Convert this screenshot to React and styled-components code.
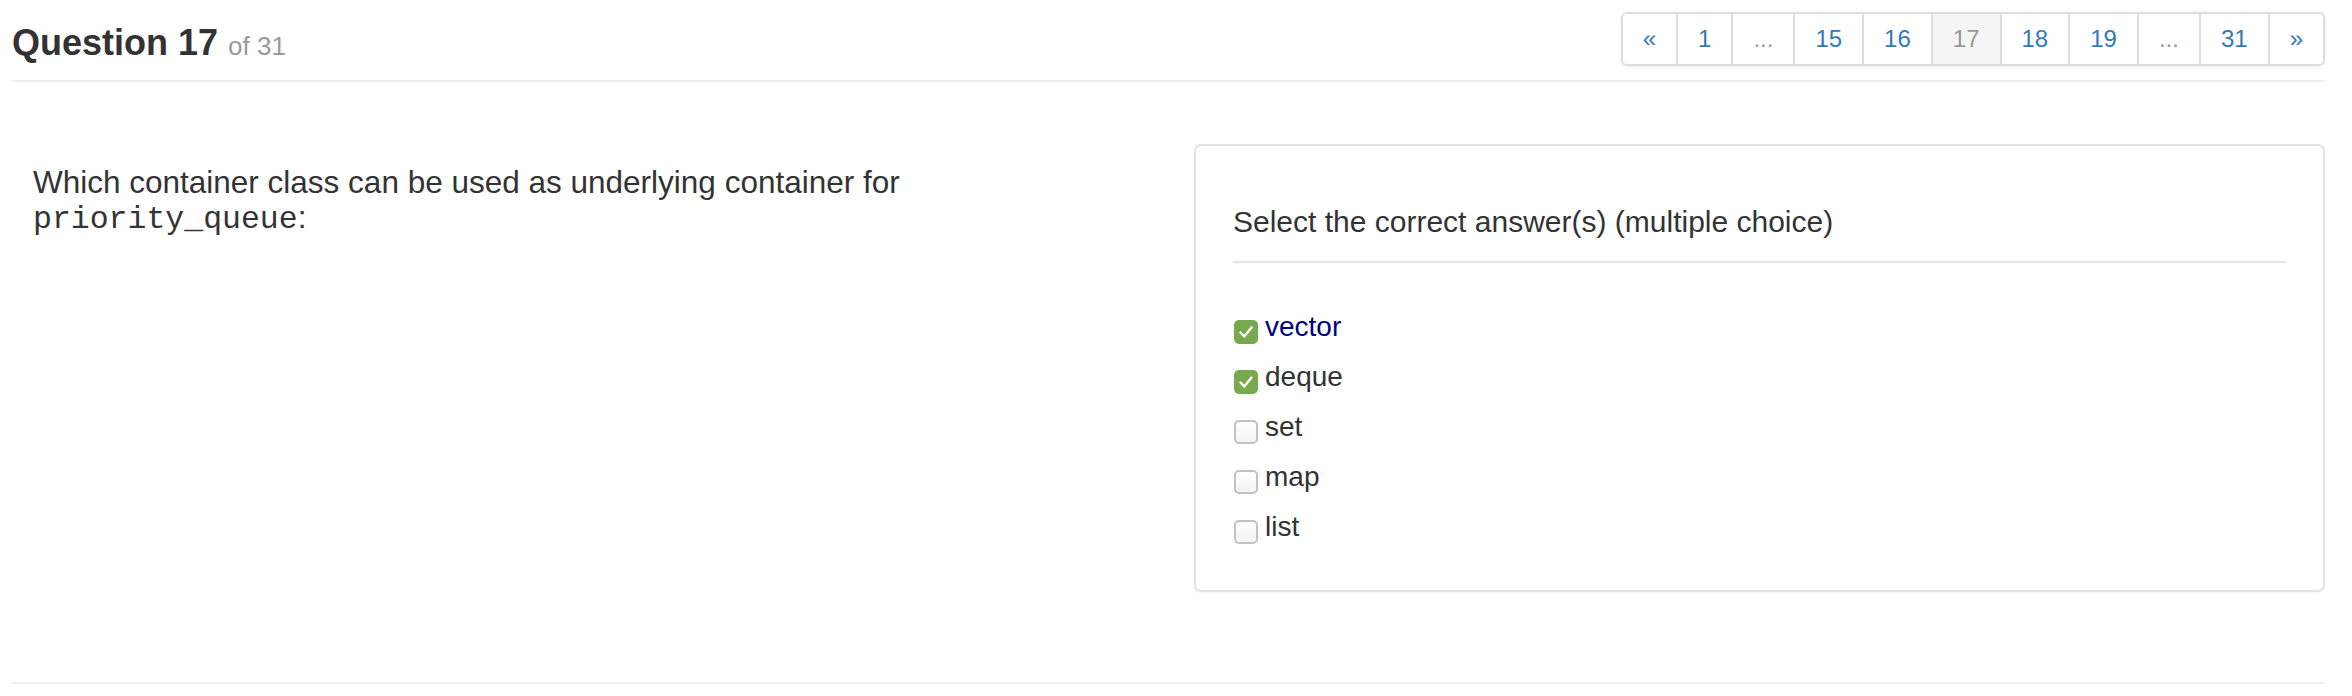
import React from "react";
import styled, { createGlobalStyle } from "styled-components";

const GlobalStyle = createGlobalStyle`
  html, body {
    margin: 0;
    padding: 0;
    background: #ffffff;
  }
  body {
    font-family: "Liberation Sans", Arial, Helvetica, sans-serif;
    color: #333333;
  }
  * { box-sizing: border-box; }
`;

const Page = styled.div`
  width: 2352px;
  padding: 0 27px 0 12px;
`;

const Header = styled.header`
  display: flex;
  justify-content: space-between;
  align-items: flex-start;
  padding: 12px 0 14px;
  border-bottom: 2px solid #eeeeee;
`;

const Title = styled.h3`
  margin: 11px 0 0;
  font-size: 36px;
  line-height: 40px;
  font-weight: 700;
  color: #333333;
`;

const Small = styled.small`
  font-size: 26px;
  font-weight: 400;
  color: #999999;
`;

const Pager = styled.ul`
  display: flex;
  margin: 0;
  padding: 0;
  list-style: none;
  border: 2px solid #dddddd;
  border-radius: 6px;
  overflow: hidden;
  box-shadow: 0 1px 3px rgba(0, 0, 0, 0.08);
`;

const PageItem = styled.li`
  padding: 9px 20px;
  font-size: 24px;
  line-height: 32px;
  color: ${(p) => (p.$muted ? "#999999" : "#337ab7")};
  background: ${(p) => (p.$active ? "#f5f5f5" : "#ffffff")};
  border-left: ${(p) => (p.$first ? "none" : "2px solid #dddddd")};
  text-align: center;
`;

const Body = styled.main`
  display: grid;
  grid-template-columns: 1fr 1131px;
  column-gap: 40px;
  padding-top: 62px;
  padding-bottom: 90px;
  border-bottom: 2px solid #eeeeee;
`;

const Question = styled.div`
  padding: 21px 0 0 21px;
  font-size: 31.5px;
  line-height: 35px;
  color: #333333;
`;

const Code = styled.code`
  font-family: "Liberation Mono", "Courier New", monospace;
  font-size: 31.5px;
`;

const Panel = styled.section`
  border: 2px solid #e3e3e3;
  border-radius: 7px;
  background: #ffffff;
  box-shadow: 0 1px 2px rgba(0, 0, 0, 0.04);
  padding: 58px 37px 38px;
`;

const Instruction = styled.div`
  font-size: 30px;
  line-height: 36px;
  color: #333333;
  padding-bottom: 21px;
  border-bottom: 2px solid #e5e5e5;
  margin-bottom: 39px;
`;

const Options = styled.ul`
  margin: 0;
  padding: 0;
  list-style: none;
`;

const Option = styled.li`
  display: flex;
  align-items: center;
  height: 50px;
  gap: 7px;
  font-size: 28px;
  color: ${(p) => (p.$highlight ? "#000080" : "#333333")};
`;

const Box = styled.span`
  flex: none;
  display: inline-flex;
  align-items: center;
  justify-content: center;
  width: 24px;
  height: 24px;
  margin: 9px 0 0 1px;
  border-radius: 5px;
  border: ${(p) => (p.$checked ? "none" : "2px solid #c2c2c2")};
  background: ${(p) =>
    p.$checked ? "#79a94f" : "linear-gradient(#ffffff, #f3f3f3)"};
`;

const Check = () => (
  <svg width="20" height="20" viewBox="0 0 20 20" aria-hidden="true">
    <path
      d="M4.5 10.5 L8.2 14.5 L15.5 5.5"
      fill="none"
      stroke="#ffffff"
      strokeWidth="2.4"
      strokeLinecap="round"
      strokeLinejoin="round"
    />
  </svg>
);

const pages = [
  { label: "«" },
  { label: "1" },
  { label: "...", muted: true },
  { label: "15" },
  { label: "16" },
  { label: "17", muted: true, active: true },
  { label: "18" },
  { label: "19" },
  { label: "...", muted: true },
  { label: "31" },
  { label: "»" },
];

const answers = [
  { label: "vector", checked: true, highlight: true },
  { label: "deque", checked: true },
  { label: "set" },
  { label: "map" },
  { label: "list" },
];

export default function App() {
  return (
    <>
      <GlobalStyle />
      <Page>
        <Header>
          <Title>
            Question 17 <Small>of 31</Small>
          </Title>
          <Pager>
            {pages.map((p, i) => (
              <PageItem
                key={i}
                $first={i === 0}
                $muted={p.muted}
                $active={p.active}
              >
                {p.label}
              </PageItem>
            ))}
          </Pager>
        </Header>
        <Body>
          <Question>
            Which container class can be used as underlying container for
            <br />
            <Code>priority_queue</Code>:
          </Question>
          <Panel>
            <Instruction>Select the correct answer(s) (multiple choice)</Instruction>
            <Options>
              {answers.map((a) => (
                <Option key={a.label} $highlight={a.highlight}>
                  <Box $checked={a.checked}>{a.checked && <Check />}</Box>
                  {a.label}
                </Option>
              ))}
            </Options>
          </Panel>
        </Body>
      </Page>
    </>
  );
}
